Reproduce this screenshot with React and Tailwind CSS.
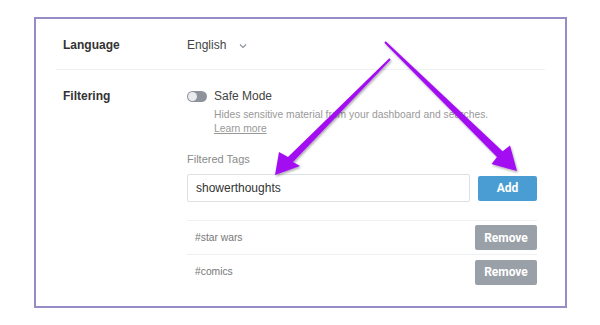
import React from "react";

const tags = ["#star wars", "#comics"];

const Arrows = () => (
  <svg
    className="absolute left-0 top-0 pointer-events-none"
    width="600"
    height="325"
    viewBox="0 0 600 325"
  >
    <defs>
      <filter id="sh" x="-20%" y="-20%" width="140%" height="140%">
        <feDropShadow dx="1" dy="1.5" stdDeviation="1" floodColor="#000" floodOpacity="0.35" />
      </filter>
    </defs>
    <g fill="#a30cf2" filter="url(#sh)">
      <polygon points="390.7,59.7 293,161.9 300,166 275,175 279,152 288,156.9 389.3,58.3" />
      <polygon points="384.3,42.7 497,157.1 491.5,164 517,171 510,145.5 502.6,151.3 385.7,41.3" />
    </g>
  </svg>
);

const Toggle = () => (
  <div className="w-[20px] h-[11px] rounded-full bg-[#8e939b] flex items-center px-[1px]">
    <div className="w-[9px] h-[9px] rounded-full bg-[#e9ebee]" />
  </div>
);

const App = () => {
  return (
    <div
      className="relative w-[600px] h-[325px] bg-white overflow-hidden"
      style={{ fontFamily: '"Liberation Sans", Arial, sans-serif' }}
    >
      <div className="absolute left-[34px] top-[17px] w-[533px] h-[291px] border-2 border-[#968cc6]" />
      <div className="pt-[19px] pl-[56px] w-[545px]">
        {/* language */}
        <div className="flex items-center h-[51px] border-b border-[#eef0f2] pl-[7px] pt-[2px]">
          <div className="w-[124px] text-[12px] font-bold text-[#333]">Language</div>
          <div className="flex items-center gap-[13px] text-[12px] text-[#444]">
            English
            <svg width="8" height="8" viewBox="0 0 8 8" className="mt-[1px]">
              <path d="M1 2.5 L4 5.5 L7 2.5" fill="none" stroke="#8a9099" strokeWidth="1.1" />
            </svg>
          </div>
        </div>

        {/* filtering */}
        <div className="flex pl-[7px] pt-[18px]">
          <div className="w-[124px] text-[12px] font-bold text-[#333] leading-[16px]">Filtering</div>
          <div className="w-[350px]">
            <div className="flex items-center gap-[7px] h-[16px]">
              <Toggle />
              <span className="text-[12px] text-[#444]">Safe Mode</span>
            </div>
            <div className="pl-[27px] pt-[4px] text-[10.3px] text-[#999] leading-[14px]">
              <div>Hides sensitive material from your dashboard and searches.</div>
              <div className="underline">Learn more</div>
            </div>
            <div className="pt-[16px] text-[11px] text-[#8a8a8a] leading-[14px]">Filtered Tags</div>
            <div className="flex items-center gap-[8px] mt-[8px]">
              <div className="w-[283px] h-[28px] border border-[#dde0e3] rounded-[2px] flex items-center pl-[8px] text-[12px] text-[#333]">
                showerthoughts
              </div>
              <button
                className="w-[59px] h-[25px] rounded-[2px] bg-[#4a9dd3] text-white text-[12px] font-bold"
                style={{ fontFamily: "Roboto, sans-serif" }}
              >
                Add
              </button>
            </div>
            <div className="mt-[18px] border-t border-[#eef0f2]">
              {tags.map((tag, i) => (
                <div
                  key={tag}
                  className={`flex items-center justify-between h-[34px] pl-[8px] ${
                    i === 0 ? "border-b border-[#eef0f2]" : ""
                  }`}
                >
                  <span className="text-[10.3px] text-[#777]">{tag}</span>
                  <button
                    className="w-[62px] h-[25px] rounded-[2px] bg-[#9aa0a8] text-white text-[12px] font-bold"
                    style={{ fontFamily: "Roboto, sans-serif" }}
                  >
                    Remove
                  </button>
                </div>
              ))}
            </div>
          </div>
        </div>
      </div>
      <Arrows />
    </div>
  );
};

export default App;
